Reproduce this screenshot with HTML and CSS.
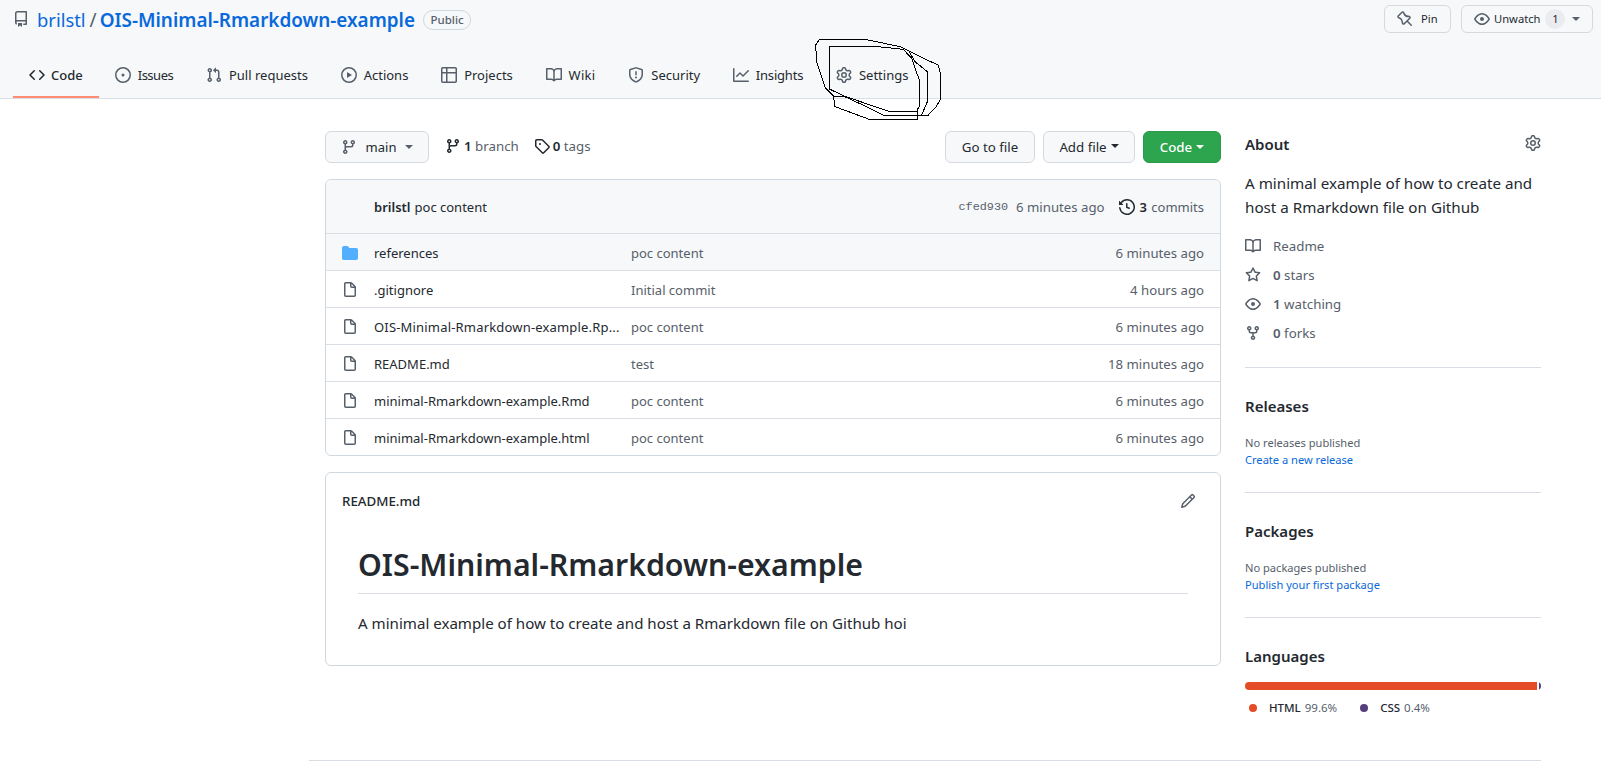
FILE: index.html
```html
<!DOCTYPE html>
<html lang="en">
<head>
<meta charset="utf-8">
<title>OIS-Minimal-Rmarkdown-example</title>
<link rel="stylesheet" href="styles.css">
</head>
<body>
<svg class="defs" width="0" height="0" aria-hidden="true">
  <symbol id="i-repo" viewBox="0 0 16 16"><path fill-rule="evenodd" d="M2 2.5A2.5 2.5 0 014.5 0h8.75a.75.75 0 01.75.75v12.5a.75.75 0 01-.75.75h-2.5a.75.75 0 110-1.5h1.75v-2h-8a1 1 0 00-.714 1.7.75.75 0 01-1.072 1.05A2.495 2.495 0 012 11.5v-9zm10.5-1V9h-8c-.356 0-.694.074-1 .208V2.5a1 1 0 011-1h8zM5 12.25v3.25a.25.25 0 00.4.2l1.45-1.087a.25.25 0 01.3 0L8.6 15.7a.25.25 0 00.4-.2v-3.25a.25.25 0 00-.25-.25h-3.5a.25.25 0 00-.25.25z"/></symbol>
  <symbol id="i-code" viewBox="0 0 16 16"><path fill-rule="evenodd" d="M4.72 3.22a.75.75 0 011.06 1.06L2.06 8l3.72 3.72a.75.75 0 11-1.06 1.06L.47 8.53a.75.75 0 010-1.06l4.25-4.25zm6.56 0a.75.75 0 10-1.06 1.06L13.94 8l-3.72 3.72a.75.75 0 101.06 1.06l4.25-4.25a.75.75 0 000-1.06l-4.25-4.25z"/></symbol>
  <symbol id="i-issue" viewBox="0 0 16 16"><path d="M8 9.5a1.5 1.5 0 100-3 1.5 1.5 0 000 3z"/><path fill-rule="evenodd" d="M8 0a8 8 0 100 16A8 8 0 008 0zM1.5 8a6.5 6.5 0 1113 0 6.5 6.5 0 01-13 0z"/></symbol>
  <symbol id="i-pr" viewBox="0 0 16 16"><path fill-rule="evenodd" d="M7.177 3.073L9.573.677A.25.25 0 0110 .854v4.792a.25.25 0 01-.427.177L7.177 3.427a.25.25 0 010-.354zM3.75 2.5a.75.75 0 100 1.5.75.75 0 000-1.5zm-2.25.75a2.25 2.25 0 113 2.122v5.256a2.251 2.251 0 11-1.5 0V5.372A2.25 2.25 0 011.5 3.25zM11 2.5h-1V4h1a1 1 0 011 1v5.628a2.251 2.251 0 101.5 0V5A2.5 2.5 0 0011 2.5zm1 10.25a.75.75 0 111.5 0 .75.75 0 01-1.5 0zM3.75 12a.75.75 0 100 1.5.75.75 0 000-1.5z"/></symbol>
  <symbol id="i-play" viewBox="0 0 16 16"><path fill-rule="evenodd" d="M1.5 8a6.5 6.5 0 1113 0 6.5 6.5 0 01-13 0zM8 0a8 8 0 100 16A8 8 0 008 0zM6.379 5.227A.25.25 0 006 5.442v5.117a.25.25 0 00.379.214l4.264-2.559a.25.25 0 000-.428L6.379 5.227z"/></symbol>
  <symbol id="i-table" viewBox="0 0 16 16"><path fill-rule="evenodd" d="M0 1.75C0 .784.784 0 1.75 0h12.5C15.216 0 16 .784 16 1.75v12.5A1.75 1.75 0 0114.25 16H1.75A1.75 1.75 0 010 14.25V1.75zM1.5 6.5v7.75c0 .138.112.25.25.25H5v-8H1.5zM5 5H1.5V1.75a.25.25 0 01.25-.25H5V5zm1.5 1.5v8h7.75a.25.25 0 00.25-.25V6.5h-8zm8-1.5h-8V1.5h7.75a.25.25 0 01.25.25V5z"/></symbol>
  <symbol id="i-book" viewBox="0 0 16 16"><path fill-rule="evenodd" d="M0 1.75A.75.75 0 01.75 1h4.253c1.227 0 2.317.59 3 1.501A3.744 3.744 0 0111.006 1h4.245a.75.75 0 01.75.75v10.5a.75.75 0 01-.75.75h-4.507a2.25 2.25 0 00-1.591.659l-.622.621a.75.75 0 01-1.06 0l-.622-.621A2.25 2.25 0 005.258 13H.75a.75.75 0 01-.75-.75V1.75zm8.755 3a2.25 2.25 0 012.25-2.25H14.5v9h-3.757c-.71 0-1.4.201-1.992.572l.004-7.322zm-1.504 7.324l.004-5.073-.002-2.253A2.25 2.25 0 005.003 2.5H1.5v9h3.757a3.75 3.75 0 011.994.574z"/></symbol>
  <symbol id="i-shield" viewBox="0 0 16 16"><path fill-rule="evenodd" d="M7.467.133a1.75 1.75 0 011.066 0l5.25 1.68A1.75 1.75 0 0115 3.48V7c0 1.566-.32 3.182-1.303 4.682-.983 1.498-2.585 2.813-5.032 3.855a1.7 1.7 0 01-1.33 0c-2.447-1.042-4.049-2.357-5.032-3.855C1.32 10.182 1 8.566 1 7V3.48a1.75 1.75 0 011.217-1.667l5.25-1.68zm.61 1.429a.25.25 0 00-.153 0l-5.25 1.68a.25.25 0 00-.174.238V7c0 1.358.275 2.666 1.057 3.86.784 1.194 2.121 2.34 4.366 3.297a.2.2 0 00.154 0c2.245-.956 3.582-2.104 4.366-3.298C13.225 9.666 13.5 8.36 13.5 7V3.48a.25.25 0 00-.174-.237l-5.25-1.68zM9 10.5a1 1 0 11-2 0 1 1 0 012 0zm-.25-5.75a.75.75 0 10-1.5 0v3a.75.75 0 001.5 0v-3z"/></symbol>
  <symbol id="i-graph" viewBox="0 0 16 16"><path fill-rule="evenodd" d="M1.5 1.75a.75.75 0 00-1.5 0v12.5c0 .414.336.75.75.75h14.5a.75.75 0 000-1.5H1.5V1.75zm14.28 2.53a.75.75 0 00-1.06-1.06L10 7.94 7.53 5.47a.75.75 0 00-1.06 0L3.22 8.72a.75.75 0 001.06 1.06L7 7.06l2.47 2.47a.75.75 0 001.06 0l5.25-5.25z"/></symbol>
  <symbol id="i-gear" viewBox="0 0 16 16"><path fill-rule="evenodd" d="M7.429 1.525a6.593 6.593 0 011.142 0c.036.003.108.036.137.146l.289 1.105c.147.56.55.967.997 1.189.174.086.341.183.501.29.417.278.97.423 1.53.27l1.102-.303c.11-.03.175.016.195.046.219.31.41.641.573.989.014.031.022.11-.059.19l-.815.806c-.411.406-.562.957-.53 1.456a4.588 4.588 0 010 .582c-.032.499.119 1.05.53 1.456l.815.806c.08.08.073.159.059.19a6.494 6.494 0 01-.573.99c-.02.029-.086.074-.195.045l-1.103-.303c-.559-.153-1.112-.008-1.529.27-.16.107-.327.204-.5.29-.449.222-.851.628-.998 1.189l-.289 1.105c-.029.11-.101.143-.137.146a6.613 6.613 0 01-1.142 0c-.036-.003-.108-.037-.137-.146l-.289-1.105c-.147-.56-.55-.967-.997-1.189a4.502 4.502 0 01-.501-.29c-.417-.278-.97-.423-1.53-.27l-1.102.303c-.11.03-.175-.016-.195-.046a6.492 6.492 0 01-.573-.989c-.014-.031-.022-.11.059-.19l.815-.806c.411-.406.562-.957.53-1.456a4.587 4.587 0 010-.582c.032-.499-.119-1.05-.53-1.456l-.815-.806c-.08-.08-.073-.159-.059-.19a6.44 6.44 0 01.573-.99c.02-.029.086-.075.195-.045l1.103.303c.559.153 1.112.008 1.529-.27.16-.107.327-.204.5-.29.449-.222.851-.628.998-1.189l.289-1.105c.029-.11.101-.143.137-.146zM8 0c-.236 0-.47.01-.701.03-.743.065-1.29.615-1.458 1.261l-.29 1.106c-.017.066-.078.158-.211.224a5.994 5.994 0 00-.668.386c-.123.082-.233.09-.3.071L3.27 2.776c-.644-.177-1.392.02-1.82.63a7.977 7.977 0 00-.704 1.217c-.315.675-.111 1.422.363 1.891l.815.806c.05.048.098.147.088.294a6.084 6.084 0 000 .772c.01.147-.038.246-.088.294l-.815.806c-.474.469-.678 1.216-.363 1.891.2.428.436.835.704 1.218.428.609 1.176.806 1.82.63l1.103-.303c.066-.019.176-.011.299.071.213.143.436.272.668.386.133.066.194.158.212.224l.289 1.106c.169.646.715 1.196 1.458 1.26a8.094 8.094 0 001.402 0c.743-.064 1.29-.614 1.458-1.26l.29-1.106c.017-.066.078-.158.211-.224a5.98 5.98 0 00.668-.386c.123-.082.233-.09.3-.071l1.102.302c.644.177 1.392-.02 1.82-.63.268-.382.505-.789.704-1.217.315-.675.111-1.422-.364-1.891l-.814-.806c-.05-.048-.098-.147-.088-.294a6.1 6.1 0 000-.772c-.01-.147.039-.246.088-.294l.814-.806c.475-.469.679-1.216.364-1.891a7.992 7.992 0 00-.704-1.218c-.428-.609-1.176-.806-1.82-.63l-1.103.303c-.066.019-.176.011-.299-.071a5.991 5.991 0 00-.668-.386c-.133-.066-.194-.158-.212-.224L10.16 1.29C9.99.645 9.444.095 8.701.031A8.094 8.094 0 008 0zm1.5 8a1.5 1.5 0 11-3 0 1.5 1.5 0 013 0zM11 8a3 3 0 11-6 0 3 3 0 016 0z"/></symbol>
  <symbol id="i-pin" viewBox="0 0 16 16"><path fill-rule="evenodd" d="M4.456.734a1.75 1.75 0 012.826.504l.613 1.327a3.081 3.081 0 002.084 1.707l2.454.584c1.332.317 1.8 1.972.832 2.94L11.06 10l3.72 3.72a.75.75 0 11-1.061 1.06L10 11.06l-2.204 2.205c-.968.968-2.623.5-2.94-.832l-.584-2.454a3.081 3.081 0 00-1.707-2.084l-1.327-.613a1.75 1.75 0 01-.504-2.826L4.456.734zM5.92 1.866a.25.25 0 00-.404-.072L1.794 5.516a.25.25 0 00.072.404l1.328.613A4.582 4.582 0 015.73 9.63l.584 2.454a.25.25 0 00.42.12l5.47-5.47a.25.25 0 00-.12-.42L9.63 6.13a4.581 4.581 0 01-3.098-2.537L5.92 1.866z"/></symbol>
  <symbol id="i-eye" viewBox="0 0 16 16"><path fill-rule="evenodd" d="M1.679 7.932c.412-.621 1.242-1.75 2.366-2.717C5.175 4.242 6.527 3.5 8 3.5c1.473 0 2.824.742 3.955 1.715 1.124.967 1.954 2.096 2.366 2.717a.119.119 0 010 .136c-.412.621-1.242 1.75-2.366 2.717C10.825 11.758 9.473 12.5 8 12.5c-1.473 0-2.824-.742-3.955-1.715C2.92 9.818 2.09 8.69 1.679 8.068a.119.119 0 010-.136zM8 2c-1.981 0-3.67.992-4.933 2.078C1.797 5.169.88 6.423.43 7.1a1.619 1.619 0 000 1.798c.45.678 1.367 1.932 2.637 3.024C4.329 13.008 6.019 14 8 14c1.981 0 3.67-.992 4.933-2.078 1.27-1.091 2.187-2.345 2.637-3.023a1.619 1.619 0 000-1.798c-.45-.678-1.367-1.932-2.637-3.023C11.671 2.992 9.981 2 8 2zm0 8a2 2 0 100-4 2 2 0 000 4z"/></symbol>
  <symbol id="i-branch" viewBox="0 0 16 16"><path fill-rule="evenodd" d="M11.75 2.5a.75.75 0 100 1.5.75.75 0 000-1.5zm-2.25.75a2.25 2.25 0 113 2.122V6A2.5 2.5 0 0110 8.5H6a1 1 0 00-1 1v1.128a2.251 2.251 0 11-1.5 0V5.372a2.25 2.25 0 111.5 0v1.836A2.492 2.492 0 016 7h4a1 1 0 001-1v-.628A2.25 2.25 0 019.5 3.25zM4.25 12a.75.75 0 100 1.5.75.75 0 000-1.5zM3.5 3.25a.75.75 0 111.5 0 .75.75 0 01-1.5 0z"/></symbol>
  <symbol id="i-tag" viewBox="0 0 16 16"><path fill-rule="evenodd" d="M2.5 7.775V2.75a.25.25 0 01.25-.25h5.025a.25.25 0 01.177.073l6.25 6.25a.25.25 0 010 .354l-5.025 5.025a.25.25 0 01-.354 0l-6.25-6.25a.25.25 0 01-.073-.177zm-1.5 0V2.75C1 1.784 1.784 1 2.75 1h5.025c.464 0 .91.184 1.238.513l6.25 6.25a1.75 1.75 0 010 2.474l-5.026 5.026a1.75 1.75 0 01-2.474 0l-6.25-6.25A1.75 1.75 0 011 7.775zM6 5a1 1 0 100 2 1 1 0 000-2z"/></symbol>
  <symbol id="i-history" viewBox="0 0 16 16"><path fill-rule="evenodd" d="M1.643 3.143L.427 1.927A.25.25 0 000 2.104V5.75c0 .138.112.25.25.25h3.646a.25.25 0 00.177-.427L2.715 4.215a6.5 6.5 0 11-1.18 4.458.75.75 0 10-1.493.154 8.001 8.001 0 101.6-5.684zM7.75 4a.75.75 0 01.75.75v2.992l2.028.812a.75.75 0 01-.557 1.392l-2.5-1A.75.75 0 017 8.25v-3.5A.75.75 0 017.75 4z"/></symbol>
  <symbol id="i-folder" viewBox="0 0 16 16"><path d="M1.75 1A1.75 1.75 0 000 2.75v10.5C0 14.216.784 15 1.75 15h12.5A1.75 1.75 0 0016 13.25v-8.5A1.75 1.75 0 0014.25 3H7.5a.25.25 0 01-.2-.1l-.9-1.2C6.07 1.26 5.55 1 5 1H1.75z"/></symbol>
  <symbol id="i-file" viewBox="0 0 16 16"><path fill-rule="evenodd" d="M3.75 1.5a.25.25 0 00-.25.25v11.5c0 .138.112.25.25.25h8.5a.25.25 0 00.25-.25V6H9.75A1.75 1.75 0 018 4.25V1.5H3.75zm5.75.56v2.19c0 .138.112.25.25.25h2.19L9.5 2.06zM2 1.75C2 .784 2.784 0 3.75 0h5.086c.464 0 .909.184 1.237.513l3.414 3.414c.329.328.513.773.513 1.237v8.086A1.75 1.75 0 0112.25 15h-8.5A1.75 1.75 0 012 13.25V1.75z"/></symbol>
  <symbol id="i-pencil" viewBox="0 0 16 16"><path fill-rule="evenodd" d="M11.013 1.427a1.75 1.75 0 012.474 0l1.086 1.086a1.75 1.75 0 010 2.474l-8.61 8.61c-.21.21-.47.364-.756.445l-3.251.93a.75.75 0 01-.927-.928l.929-3.25a1.75 1.75 0 01.445-.758l8.61-8.61zm1.414 1.06a.25.25 0 00-.354 0L10.811 3.75l1.439 1.44 1.263-1.263a.25.25 0 000-.354l-1.086-1.086zM11.189 6.25L9.75 4.81l-6.286 6.287a.25.25 0 00-.064.108l-.558 1.953 1.953-.558a.249.249 0 00.108-.064l6.286-6.286z"/></symbol>
  <symbol id="i-star" viewBox="0 0 16 16"><path fill-rule="evenodd" d="M8 .25a.75.75 0 01.673.418l1.882 3.815 4.21.612a.75.75 0 01.416 1.279l-3.046 2.97.719 4.192a.75.75 0 01-1.088.791L8 12.347l-3.766 1.98a.75.75 0 01-1.088-.79l.72-4.194L.818 6.374a.75.75 0 01.416-1.28l4.21-.611L7.327.668A.75.75 0 018 .25zm0 2.445L6.615 5.5a.75.75 0 01-.564.41l-3.097.45 2.24 2.184a.75.75 0 01.216.664l-.528 3.084 2.769-1.456a.75.75 0 01.698 0l2.77 1.456-.53-3.084a.75.75 0 01.216-.664l2.24-2.183-3.096-.45a.75.75 0 01-.564-.41L8 2.694z"/></symbol>
  <symbol id="i-fork" viewBox="0 0 16 16"><path fill-rule="evenodd" d="M5 3.25a.75.75 0 11-1.5 0 .75.75 0 011.5 0zm0 2.122a2.25 2.25 0 10-1.5 0v.878A2.25 2.25 0 005.75 8.5h1.5v2.128a2.251 2.251 0 101.5 0V8.5h1.5a2.25 2.25 0 002.25-2.25v-.878a2.25 2.25 0 10-1.5 0v.878a.75.75 0 01-.75.75h-4.5A.75.75 0 015 6.25v-.878zm3.75 7.378a.75.75 0 11-1.5 0 .75.75 0 011.5 0zm3-8.75a.75.75 0 100-1.5.75.75 0 000 1.5z"/></symbol>
</svg>

<header class="repohead">
  <div class="titlebar">
    <div class="crumbs">
      <svg class="icon repo-icon"><use href="#i-repo"/></svg>
      <a class="owner">brilstl</a><span class="slash">/</span><a class="repo">OIS-Minimal-Rmarkdown-example</a>
      <span class="badge">Public</span>
    </div>
    <div class="actions">
      <a class="btn btn-sm btn-pin"><svg class="icon"><use href="#i-pin"/></svg><span>Pin</span></a>
      <a class="btn btn-sm btn-watch"><svg class="icon"><use href="#i-eye"/></svg><span>Unwatch</span><span class="counter">1</span><i class="caret"></i></a>
    </div>
  </div>
  <nav class="tabs">
    <a class="tab active"><svg class="icon"><use href="#i-code"/></svg>Code</a>
    <a class="tab tab-issues"><svg class="icon"><use href="#i-issue"/></svg>Issues</a>
    <a class="tab"><svg class="icon"><use href="#i-pr"/></svg>Pull requests</a>
    <a class="tab"><svg class="icon"><use href="#i-play"/></svg>Actions</a>
    <a class="tab"><svg class="icon"><use href="#i-table"/></svg>Projects</a>
    <a class="tab tab-wiki"><svg class="icon"><use href="#i-book"/></svg>Wiki</a>
    <a class="tab"><svg class="icon"><use href="#i-shield"/></svg>Security</a>
    <a class="tab tab-insights"><svg class="icon"><use href="#i-graph"/></svg>Insights</a>
    <a class="tab"><svg class="icon"><use href="#i-gear"/></svg>Settings</a>
  </nav>
</header>

<svg class="scribble" viewBox="0 0 1350 390" fill="none" stroke="#000" stroke-width="3" aria-hidden="true">
  <path d="M808 118L955 120 1050 140 1080 155 1135 182 1165 195 1170 215 1170 300 1160 318 1135 345 1000 345 960 325 880 288 850 288 825 262 815 230 800 185 797 135Z"/>
  <path d="M840 138L965 138 1060 148 1085 175 1097 210 1108 240 1108 320 1100 335 1020 335 960 315 880 287 840 268 838 150Z"/>
  <path d="M1075 150L1095 185 1132 215 1132 305 1115 345 1000 345M850 288L855 320 955 357 1102 357 1102 325"/>
</svg>

<main class="layout">
  <section class="content">
    <div class="filebar">
      <a class="btn btn-branch"><svg class="icon"><use href="#i-branch"/></svg><span>main</span><i class="caret"></i></a>
      <a class="meta meta-branch"><svg class="icon dark"><use href="#i-branch"/></svg><b>1</b> branch</a>
      <a class="meta meta-tag"><svg class="icon dark"><use href="#i-tag"/></svg><b>0</b> tags</a>
      <span class="spacer"></span>
      <a class="btn btn-goto">Go to file</a>
      <a class="btn btn-add">Add file<i class="caret dark-caret"></i></a>
      <a class="btn btn-green">Code<i class="caret white-caret"></i></a>
    </div>

    <div class="filebox">
      <div class="commit">
        <span class="author">brilstl</span><span class="message">poc content</span>
        <span class="spacer"></span>
        <code class="sha">cfed930</code><span class="ago">6 minutes ago</span>
        <svg class="icon dark hist"><use href="#i-history"/></svg><span class="commits"><b>3</b> commits</span>
      </div>
      <div class="row row-dir"><svg class="icon folder"><use href="#i-folder"/></svg><span class="fname">references</span><span class="fmsg">poc content</span><span class="ftime">6 minutes ago</span></div>
      <div class="row"><svg class="icon"><use href="#i-file"/></svg><span class="fname">.gitignore</span><span class="fmsg">Initial commit</span><span class="ftime">4 hours ago</span></div>
      <div class="row"><svg class="icon"><use href="#i-file"/></svg><span class="fname fname-long">OIS-Minimal-Rmarkdown-example.Rp...</span><span class="fmsg">poc content</span><span class="ftime">6 minutes ago</span></div>
      <div class="row"><svg class="icon"><use href="#i-file"/></svg><span class="fname">README.md</span><span class="fmsg">test</span><span class="ftime">18 minutes ago</span></div>
      <div class="row"><svg class="icon"><use href="#i-file"/></svg><span class="fname">minimal-Rmarkdown-example.Rmd</span><span class="fmsg">poc content</span><span class="ftime">6 minutes ago</span></div>
      <div class="row"><svg class="icon"><use href="#i-file"/></svg><span class="fname">minimal-Rmarkdown-example.html</span><span class="fmsg">poc content</span><span class="ftime">6 minutes ago</span></div>
    </div>

    <article class="readme">
      <div class="readme-head"><span>README.md</span><svg class="icon pencil"><use href="#i-pencil"/></svg></div>
      <div class="readme-body">
        <h1>OIS-Minimal-Rmarkdown-example</h1>
        <p>A minimal example of how to create and host a Rmarkdown file on Github hoi</p>
      </div>
    </article>
  </section>

  <aside class="side">
    <div class="block block-about">
      <div class="about-head"><h2>About</h2><svg class="icon"><use href="#i-gear"/></svg></div>
      <p class="desc">A minimal example of how to create and host a Rmarkdown file on Github</p>
      <ul class="stats">
        <li><svg class="icon"><use href="#i-book"/></svg>Readme</li>
        <li><svg class="icon"><use href="#i-star"/></svg><b>0</b>&nbsp;stars</li>
        <li><svg class="icon"><use href="#i-eye"/></svg><b>1</b>&nbsp;watching</li>
        <li><svg class="icon"><use href="#i-fork"/></svg><b>0</b>&nbsp;forks</li>
      </ul>
    </div>
    <div class="block">
      <h2>Releases</h2>
      <div class="small muted">No releases published</div>
      <a class="small link">Create a new release</a>
    </div>
    <div class="block">
      <h2>Packages</h2>
      <div class="small muted">No packages published</div>
      <a class="small link">Publish your first package</a>
    </div>
    <div class="block block-last">
      <h2>Languages</h2>
      <div class="langbar"><span class="lang-html"></span><span class="lang-css"></span></div>
      <div class="legend">
        <span class="dot dot-html"></span><b>HTML</b><span class="pct">99.6%</span>
        <span class="dot dot-css"></span><b>CSS</b><span class="pct">0.4%</span>
      </div>
    </div>
  </aside>
</main>
<div class="footer-line"></div>
</body>
</html>
```
FILE: styles.css
```css
* { box-sizing: border-box; }
html, body { margin: 0; padding: 0; height: 771px; overflow: hidden; }
body {
  position: relative;
  background: #fff;
  color: #24292f;
  font-family: "Noto Sans", "Open Sans", sans-serif;
  font-size: 13.3px;
  line-height: 20px;
}
.defs { position: absolute; }
.icon { width: 16px; height: 16px; fill: #57606a; flex: none; display: block; }
.icon.dark { fill: #24292f; }
b { font-weight: 600; }
ul { list-style: none; margin: 0; padding: 0; }

/* header */
.repohead { height: 99px; background: #f6f8fa; border-bottom: 1px solid #d8dee4; position: relative; }
.titlebar { display: flex; justify-content: space-between; height: 51px; padding: 5px 8px 0 13px; }
.crumbs { display: flex; align-items: center; height: 28px; margin-top: 1px; font-size: 19px; }
.repo-icon { margin: -2px 8px 0 0; }
.owner { color: #0969da; font-weight: 400; font-size: 18.4px; }
.slash { color: #57606a; margin: 0 3px 0 4px; }
.repo { color: #0969da; font-weight: 600; font-size: 18.9px; }
.badge {
  margin-left: 8px; height: 20px; padding: 0 6.5px; border: 1px solid #d0d7de; border-radius: 10px;
  font-size: 11.5px; line-height: 18px; color: #57606a; font-weight: 500;
}
.actions { display: flex; gap: 10px; }
.btn {
  display: inline-flex; align-items: center; justify-content: center;
  background: #f6f8fa; border: 1px solid #d5d9de; border-radius: 6px; color: #24292f;
}
.btn-sm { height: 28px; font-size: 11.2px; justify-content: flex-start; padding-left: 12px; }
.btn-pin { width: 67px; gap: 8px; }
.btn-watch { width: 132px; gap: 4px; }
.counter {
  width: 20px; height: 20px; margin-left: 1px; margin-right: 3px; border-radius: 10px; background: #eaecef;
  text-align: center; line-height: 20px; font-size: 11.2px;
}
.caret { display: inline-block; width: 0; height: 0; border: 4px solid transparent; border-top-color: #57606a; border-bottom: 0; }

/* tabs */
.tabs { display: flex; height: 47px; padding-left: 13px; font-size: 13px; }
.tab { display: flex; align-items: center; gap: 7px; padding: 0 16px; margin-right: .75px; height: 47px; color: #24292f; }
.tab.active { gap: 6px; margin-right: 0; font-weight: 500; border-bottom: 2px solid #fd8c73; padding-top: 2px; }
.tab.active .icon { fill: #24292f; }
.tab-issues { letter-spacing: -.5px; }
.tab-wiki { letter-spacing: .3px; }
.tab-insights { letter-spacing: -.2px; }
.scribble { position: absolute; left: 550px; top: 0; width: 450px; height: 130px; shape-rendering: crispEdges; }

/* layout */
.layout { display: flex; gap: 24px; padding: 32px 0 0 325px; }
.content { width: 896px; }
.side { width: 296px; }
.filebar { display: flex; align-items: center; height: 32px; }
.spacer { flex: 1; }
.btn-branch { width: 104px; height: 32px; gap: 9px; font-size: 13px; }
.meta { display: flex; align-items: center; color: #57606a; white-space: pre; margin-top: -2px; }
.meta b { color: #24292f; margin-left: 3px; }
.meta-branch { margin-left: 16px; }
.meta-tag { margin-left: 15px; }
.meta-tag b { margin-left: 3px; }
.btn-goto, .btn-add, .btn-green { height: 32px; }
.btn-goto { width: 90px; margin-right: 8px; }
.btn-add { width: 92px; margin-right: 8px; gap: 4px; }
.btn-add .caret { border-top-color: #24292f; margin-top: -2px; }
.btn-green { width: 78px; gap: 4px; background: #2da44e; border-color: #2a9a49; color: #fff; font-weight: 500; }
.white-caret { border-top-color: #fff; }

.filebox { margin-top: 16px; border: 1px solid #d0d7de; border-radius: 6px; overflow: hidden; font-size: 13px; }
.commit { display: flex; align-items: center; height: 54px; padding: 0 16px 0 48px; background: #f6f8fa; border-bottom: 1px solid #d8dee4; }
.author { font-weight: 600; margin-right: 4px; }
.sha { font-family: "Liberation Mono", monospace; font-size: 11.8px; color: #57606a; margin-right: 8px; }
.ago { color: #57606a; font-size: 13.2px; }
.hist { margin-left: 15px; margin-right: 4px; }
.commits { color: #57606a; }
.commits b { color: #24292f; margin-right: 1px; }
.row { display: flex; align-items: center; height: 37px; padding: 2px 16px 0; border-top: 1px solid #d8dee4; }
.commit + .row { border-top: 0; height: 36px; padding-top: 2px; }
.row-dir { background: #f6f8fa; }
.folder { fill: #54aeff; }
.fname { width: 257px; margin-left: 16px; white-space: nowrap; }
.fname-long { letter-spacing: .18px; }
.fmsg { flex: 1; color: #57606a; }
.ftime { color: #57606a; font-size: 13.2px; }

.readme { margin-top: 16px; height: 194px; border: 1px solid #d0d7de; border-radius: 6px; }
.readme-head { display: flex; justify-content: space-between; align-items: center; height: 56px; padding: 0 24px 0 16px; font-weight: 500; }
.pencil { fill: #57606a; }
.readme-body { padding: 0 32px; }
h1 { margin: 0; padding: 14px 0 7px; height: 65px; font-size: 30.25px; line-height: 44px; font-weight: 600; border-bottom: 1px solid #d8dee4; }
.readme-body p { margin: 16px 0 0; font-size: 15.1px; line-height: 26px; }

/* sidebar */
.block { border-bottom: 1px solid #d8dee4; padding-bottom: 24px; margin-bottom: 24px; }
.block-last { border: 0; margin: 0; padding: 0; }
h2 { margin: 0 0 16px; padding-top: 2px; font-size: 15px; line-height: 24px; font-weight: 600; }
.about-head { display: flex; justify-content: space-between; align-items: center; height: 24px; }
.about-head h2 { margin: 0; padding-top: 1px; height: 24px; }
.desc { margin: 16px 0 17px; font-size: 15.2px; line-height: 24px; }
.stats li { display: flex; align-items: center; height: 20px; margin-top: 9px; color: #57606a; }
.stats li:first-child { margin-top: 0; }
.stats .icon { margin-right: 12px; }
.small { font-size: 11.1px; line-height: 17px; display: block; }
.muted { color: #57606a; }
.link { color: #0969da; }
.langbar { display: flex; height: 8px; border-radius: 6px; overflow: hidden; gap: 2px; margin-top: -2px; }
.lang-html { flex: 1; background: #e34c26; }
.lang-css { width: 2px; background: #563d7c; }
.legend { display: flex; align-items: center; margin-top: 9px; font-size: 11.5px; height: 18px; }
.dot { width: 8px; height: 8px; border-radius: 50%; margin-left: 4px; margin-right: 12px; }
.dot-html { background: #e34c26; }
.dot-css { background: #563d7c; margin-left: 23px; }
.legend b { font-weight: 500; }
.pct { color: #57606a; margin-left: 4px; }

.footer-line { position: absolute; left: 309px; right: 60px; top: 760px; border-top: 1px solid #d8dee4; }
```
